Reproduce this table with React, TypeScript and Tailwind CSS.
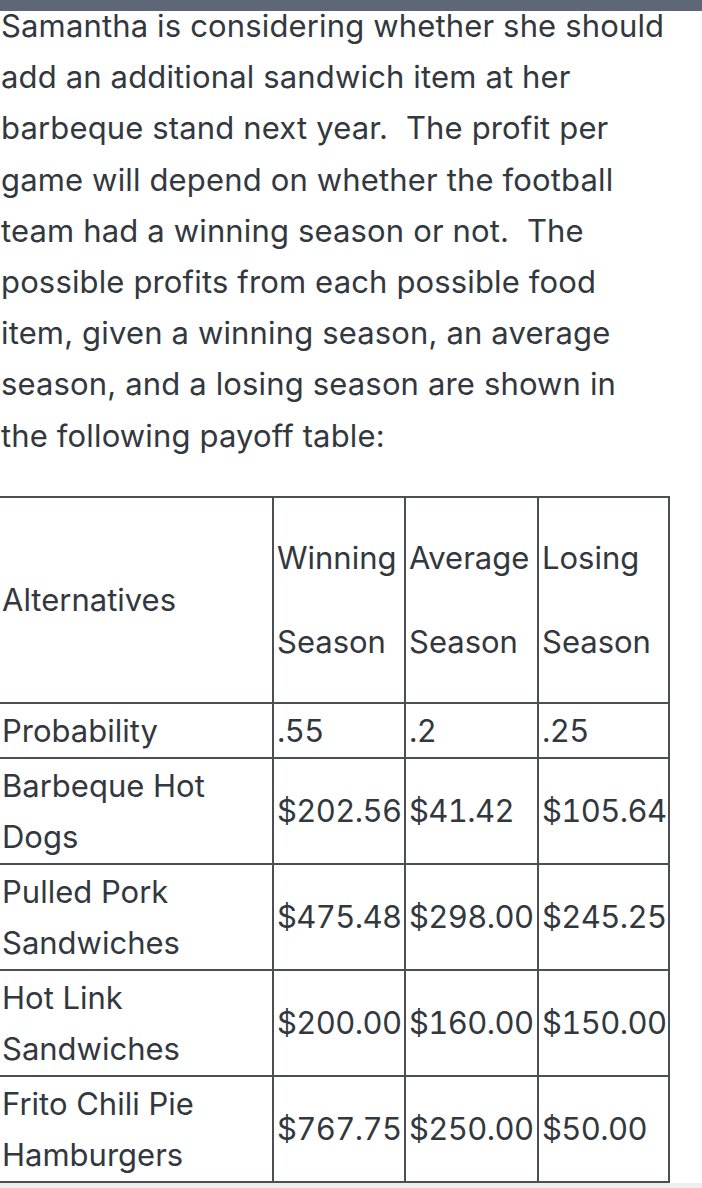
import React from 'react'

const LINES = [
  'Samantha is considering whether she should',
  'add an additional sandwich item at her',
  'barbeque stand next year.\u00a0 The profit per',
  'game will depend on whether the football',
  'team had a winning season or not.\u00a0 The',
  'possible profits from each possible food',
  'item, given a winning season, an average',
  'season, and a losing season are shown in',
  'the following payoff table:',
]

const ROWS = [
  { name: ['Probability'], vals: ['.55', '.2', '.25'] },
  { name: ['Barbeque Hot', 'Dogs'], vals: ['$202.56', '$41.42', '$105.64'] },
  { name: ['Pulled Pork', 'Sandwiches'], vals: ['$475.48', '$298.00', '$245.25'] },
  { name: ['Hot Link', 'Sandwiches'], vals: ['$200.00', '$160.00', '$150.00'] },
  { name: ['Frito Chili Pie', 'Hamburgers'], vals: ['$767.75', '$250.00', '$50.00'] },
]

const cell = 'border-2 border-[#4b4f54] pl-[3px] pr-0 text-left align-middle font-normal'

export default function App() {
  return (
    <div
      className="w-[702px] h-[1188px] overflow-hidden bg-white text-[#32383e] text-[31px] leading-[51.2px]"
      style={{ fontFamily: 'Inter, "Liberation Sans", sans-serif' }}
    >
      <div className="h-[11px] bg-[#5d6778]" />
      <p className="pl-[1px] -mt-[11px] whitespace-nowrap tracking-[0.15px]">
        {LINES.map((l) => (
          <span key={l} className="block">{l}</span>
        ))}
      </p>

      <table className="mt-[35px] -ml-[3px] border-collapse table-fixed w-[671px]">
        <colgroup>
          <col className="w-[275px]" />
          <col className="w-[132px]" />
          <col className="w-[133px]" />
          <col className="w-[131px]" />
        </colgroup>
        <thead>
          <tr className="h-[206px]">
            <th className={cell}>Alternatives</th>
            {['Winning', 'Average', 'Losing'].map((h) => (
              <th key={h} className={cell}>
                <div className="flex flex-col gap-[33px] whitespace-nowrap">
                  <span>{h}</span>
                  <span>Season</span>
                </div>
              </th>
            ))}
          </tr>
        </thead>
        <tbody>
          {ROWS.map((r, i) => (
            <tr key={i} className={i === 0 ? 'h-[55px]' : 'h-[106px]'}>
              <td className={cell}>
                {r.name.map((n) => (
                  <div key={n} className="whitespace-nowrap">{n}</div>
                ))}
              </td>
              {r.vals.map((v, j) => (
                <td
                  key={j}
                  className={cell + ' whitespace-nowrap tabular-nums tracking-[-0.6px] overflow-hidden'}
                >
                  {v}
                </td>
              ))}
            </tr>
          ))}
        </tbody>
      </table>
      <div className="h-[6px] bg-[#eeeeee]" />
    </div>
  )
}
